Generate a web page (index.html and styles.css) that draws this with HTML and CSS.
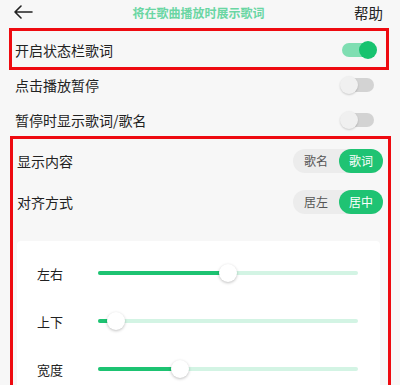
FILE: index.html
```html
<!DOCTYPE html>
<html lang="zh">
<head>
<meta charset="utf-8">
<link rel="stylesheet" href="styles.css">
</head>
<body>
<div class="page">
  <header class="header">
    <svg class="back" width="20" height="14" viewBox="0 0 20 14"><path d="M19 7H2M8 1L2 7l6 6" fill="none" stroke="#222" stroke-width="1.6" stroke-linecap="round" stroke-linejoin="round"/></svg>
    <div class="title">将在歌曲播放时展示歌词</div>
    <div class="help">帮助</div>
  </header>

  <div class="mark mark-one">
    <div class="row">
      <span class="label">开启状态栏歌词</span>
      <span class="toggle on"><span class="track"></span><span class="knob"></span></span>
    </div>
  </div>
  <div class="row">
    <span class="label">点击播放暂停</span>
    <span class="toggle"><span class="track"></span><span class="knob"></span></span>
  </div>
  <div class="row">
    <span class="label">暂停时显示歌词/歌名</span>
    <span class="toggle"><span class="track"></span><span class="knob"></span></span>
  </div>

  <div class="mark mark-two">
    <div class="seg-row">
      <span class="label">显示内容</span>
      <span class="seg"><span class="opt">歌名</span><span class="opt active">歌词</span></span>
    </div>
    <div class="seg-row">
      <span class="label">对齐方式</span>
      <span class="seg"><span class="opt">居左</span><span class="opt active">居中</span></span>
    </div>
    <div class="card">
      <div class="slider-row">
        <span class="s-label">左右</span>
        <span class="slider"><span class="fill" style="width:50%"></span><span class="thumb" style="left:50%"></span></span>
      </div>
      <div class="slider-row">
        <span class="s-label">上下</span>
        <span class="slider"><span class="fill" style="width:7%"></span><span class="thumb" style="left:7%"></span></span>
      </div>
      <div class="slider-row">
        <span class="s-label">宽度</span>
        <span class="slider"><span class="fill" style="width:31.5%"></span><span class="thumb" style="left:31.5%"></span></span>
      </div>
    </div>
  </div>
</div>
</body>
</html>
```

FILE: styles.css
```css
html, body {
  margin: 0;
  padding: 0;
  background: #f7f7f7;
}
body {
  font-family: "Noto Sans CJK SC", "Noto Sans", sans-serif;
  color: #222;
  width: 400px;
  height: 385px;
  overflow: hidden;
}
.page {
  width: 400px;
  height: 385px;
  overflow: hidden;
}
.header {
  height: 24px;
  display: flex;
  align-items: center;
  justify-content: space-between;
  padding: 0 17px 0 13px;
}
.back {
  display: block;
}
.title {
  font-size: 12px;
  font-weight: 600;
  color: #6ad6a3;
  margin-left: 10px;
}
.help {
  font-size: 14.5px;
  color: #222;
}
.mark {
  position: relative;
}
.mark::after {
  content: "";
  position: absolute;
  border: 3px solid #ee0a10;
  pointer-events: none;
}
.mark-one {
  margin-top: 8px;
}
.mark-one::after {
  top: -4px;
  bottom: -3px;
  left: 9px;
  right: 11px;
}
.mark-two::after {
  top: -3px;
  bottom: -6px;
  left: 10px;
  right: 9px;
}
.row {
  height: 35px;
  display: flex;
  align-items: center;
  justify-content: space-between;
  padding: 0 22px 0 15px;
}
.label {
  font-size: 14px;
}
.toggle {
  position: relative;
  width: 38px;
  height: 18px;
  display: block;
}
.track {
  position: absolute;
  left: 2px;
  right: 4px;
  top: 2px;
  height: 14px;
  border-radius: 7px;
  background: #d3d3d3;
}
.knob {
  position: absolute;
  top: 0;
  left: 0;
  width: 18px;
  height: 18px;
  border-radius: 50%;
  background: #f0f0f0;
  box-shadow: 0 1px 2px rgba(0,0,0,0.18);
}
.toggle.on .track {
  background: #7fdeb2;
}
.toggle.on .knob {
  left: auto;
  right: 1px;
  background: #17c36f;
  box-shadow: none;
}
.mark-two {
  margin-top: 2px;
  padding-top: 1px;
}
.seg-row {
  height: 41px;
  display: flex;
  align-items: center;
  justify-content: space-between;
  padding: 0 17px 0 17px;
}
.seg {
  display: flex;
  width: 90px;
  height: 24px;
  border-radius: 12px;
  background: #ececec;
}
.opt {
  flex: 1;
  display: flex;
  align-items: center;
  justify-content: center;
  font-size: 12px;
  color: #555;
  border-radius: 12px;
}
.opt.active {
  flex: 0 0 44px;
  background: #1fc373;
  color: #fff;
}
.card {
  margin: 19px 20px 0 17px;
  background: #fff;
  border-radius: 4px;
  padding: 8px 22px 0 20px;
}
.slider-row {
  height: 48px;
  display: flex;
  align-items: center;
}
.s-label {
  width: 61px;
  font-size: 13px;
}
.slider {
  position: relative;
  flex: 1;
  height: 4px;
  border-radius: 2px;
  background: #d3f4e4;
}
.fill {
  position: absolute;
  left: 0;
  top: 0;
  height: 4px;
  border-radius: 2px;
  background: #1dc372;
}
.thumb {
  position: absolute;
  top: -7px;
  width: 18px;
  height: 18px;
  margin-left: -9px;
  border-radius: 50%;
  background: #fff;
  box-shadow: 0 1px 3px rgba(0,0,0,0.25);
}
```
